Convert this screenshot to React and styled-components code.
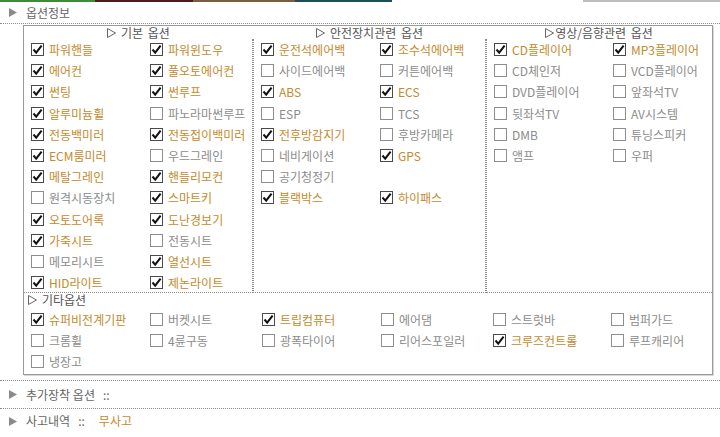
import React from "react";
import styled, { createGlobalStyle } from "styled-components";

const GOLD = "#c48a2c";
const GREY_TEXT = "#8c8c8c";
const DOT = "1px dotted #8c8c8c";

const GlobalStyle = createGlobalStyle`
    body {
        margin: 0;
        background: #ffffff;
        font-family: "Noto Sans CJK KR", "Noto Sans", sans-serif;
        font-size: 12px;
        color: #666666;
    }
`;

const Page = styled.div`
    width: 720px;
    height: 437px;
    overflow: hidden;
`;

const Strip = styled.div`
    display: flex;
    height: 2px;
`;

const StripPart = styled.div`
    width: ${p => p.$w}px;
    background: ${p => p.$c};
`;

const TitleRow = styled.div`
    display: flex;
    align-items: center;
    gap: 9px;
    height: ${p => p.$h}px;
    padding-left: 9px;
    border-bottom: ${p => (p.$bottom ? DOT : "none")};
    border-top: ${p => (p.$top ? DOT : "none")};
    color: #666666;
    line-height: 12px;
`;

const Sep = styled.span`
    margin-left: 8px;
`;

const Gold = styled.span`
    color: ${GOLD};
    margin-left: 14px;
`;

const Box = styled.div`
    margin: 1px 7px 0 23px;
    border: 1px solid #9a9a9a;
    box-shadow: 1px 1px 0 #d8d8d8;
`;

const Columns = styled.div`
    display: grid;
    grid-template-columns: 229px 233px 1fr;
`;

const ColHead = styled.div`
    display: flex;
    align-items: center;
    justify-content: ${p => (p.$left ? "flex-start" : "center")};
    gap: ${p => p.$gap}px;
    height: 13px;
    line-height: 13px;
    padding-left: ${p => (p.$left ? 4 : 0)}px;
    color: #555555;
    word-spacing: 2px;
`;

const Mark = () => (
    <svg width="9" height="10" viewBox="0 0 9 10">
        <polygon points="0.5,0.5 8.5,5 0.5,9.5" fill="none" stroke="#666" strokeWidth="1" />
    </svg>
);

const Cell = styled.div`
    display: grid;
    grid-template-columns: 119px 1fr;
    grid-auto-rows: 21.2px;
    align-content: start;
    height: 254px;
    box-sizing: border-box;
    padding-left: 7px;
    border-bottom: ${DOT};
    border-left: ${p => (p.$left ? DOT : "none")};
    border-right: ${p => (p.$right ? DOT : "none")};
`;

const OtherGrid = styled.div`
    display: grid;
    grid-template-columns: 119px 112px 119px 112px 118px 1fr;
    grid-auto-rows: 21px;
    padding: 3px 0 2px 7px;
`;

const Item = styled.div`
    display: flex;
    align-items: center;
    gap: 5px;
    white-space: nowrap;
    color: ${p => (p.$on ? GOLD : GREY_TEXT)};
    line-height: 13px;
`;

const Box13 = styled.span`
    display: inline-flex;
    align-items: center;
    justify-content: center;
    width: 13px;
    height: 13px;
    box-sizing: border-box;
    border: 1px solid ${p => (p.$on ? "#4a4a4a" : "#8e8e8e")};
    background: #ffffff;
    flex: none;
`;

const Tri = () => (
    <svg width="8" height="9" viewBox="0 0 8 9">
        <polygon points="0,0 8,4.5 0,9" fill="#8a8a8a" />
    </svg>
);

const Check = ({ on }) => (
    <Box13 $on={on}>
        {on && (
            <svg width="11" height="11" viewBox="0 0 11 11">
                <path d="M1.5 5.5 L4.2 8.6 L9.6 1.6" fill="none" stroke="#111" strokeWidth="2" />
            </svg>
        )}
    </Box13>
);

const Opt = ({ label, on }) => (
    <Item $on={on}>
        <Check on={on} />
        {label}
    </Item>
);

const basic = [
    ["파워핸들", 1], ["파워윈도우", 1],
    ["에어컨", 1], ["풀오토에어컨", 1],
    ["썬팅", 1], ["썬루프", 1],
    ["알루미늄휠", 1], ["파노라마썬루프", 0],
    ["전동백미러", 1], ["전동접이백미러", 1],
    ["ECM룸미러", 1], ["우드그레인", 0],
    ["메탈그레인", 1], ["핸들리모컨", 1],
    ["원격시동장치", 0], ["스마트키", 1],
    ["오토도어록", 1], ["도난경보기", 1],
    ["가죽시트", 1], ["전동시트", 0],
    ["메모리시트", 0], ["열선시트", 1],
    ["HID라이트", 1], ["제논라이트", 1],
];

const safety = [
    ["운전석에어백", 1], ["조수석에어백", 1],
    ["사이드에어백", 0], ["커튼에어백", 0],
    ["ABS", 1], ["ECS", 1],
    ["ESP", 0], ["TCS", 0],
    ["전후방감지기", 1], ["후방카메라", 0],
    ["네비게이션", 0], ["GPS", 1],
    ["공기청정기", 0], null,
    ["블랙박스", 1], ["하이패스", 1],
];

const media = [
    ["CD플레이어", 1], ["MP3플레이어", 1],
    ["CD체인저", 0], ["VCD플레이어", 0],
    ["DVD플레이어", 0], ["앞좌석TV", 0],
    ["뒷좌석TV", 0], ["AV시스템", 0],
    ["DMB", 0], ["튜닝스피커", 0],
    ["앰프", 0], ["우퍼", 0],
];

const other = [
    ["슈퍼비전계기판", 1], ["버켓시트", 0], ["트립컴퓨터", 1], ["에어댐", 0], ["스트럿바", 0], ["범퍼가드", 0],
    ["크롬휠", 0], ["4륜구동", 0], ["광폭타이어", 0], ["리어스포일러", 0], ["크루즈컨트롤", 1], ["루프캐리어", 0],
    ["냉장고", 0],
];

const renderList = list =>
    list.map((o, i) => (o ? <Opt key={i} label={o[0]} on={!!o[1]} /> : <span key={i} />));

const strip = [
    [95, "#3d8c3a"], [98, "#4a1c1c"], [102, "#7b5e3e"], [97, "#1f4b5a"], [191, "#ffffff"], [137, "#bdbdbd"],
];

const App = () => {
    return (
        <Page>
            <GlobalStyle />
            <Strip>
                {strip.map(([w, c], i) => <StripPart key={i} $w={w} $c={c} />)}
            </Strip>
            <TitleRow $h={21} $bottom>
                <Tri />
                옵션정보
            </TitleRow>
            <Box>
                <Columns>
                    <ColHead $gap={5}><Mark />기본 옵션</ColHead>
                    <ColHead $gap={5}><Mark />안전장치관련 옵션</ColHead>
                    <ColHead $gap={1}><Mark />영상/음향관련 옵션</ColHead>
                    <Cell $right>{renderList(basic)}</Cell>
                    <Cell $left $right>{renderList(safety)}</Cell>
                    <Cell $left>{renderList(media)}</Cell>
                </Columns>
                <ColHead $left $gap={5}><Mark />기타옵션</ColHead>
                <OtherGrid>{renderList(other)}</OtherGrid>
            </Box>
            <div style={{ height: 5 }} />
            <TitleRow $h={27} $top $bottom>
                <Tri />
                <span>
                    추가장착 옵션<Sep>::</Sep>
                </span>
            </TitleRow>
            <TitleRow $h={24}>
                <Tri />
                <span>
                    사고내역<Sep>::</Sep>
                    <Gold>무사고</Gold>
                </span>
            </TitleRow>
        </Page>
    );
};

export default App;
